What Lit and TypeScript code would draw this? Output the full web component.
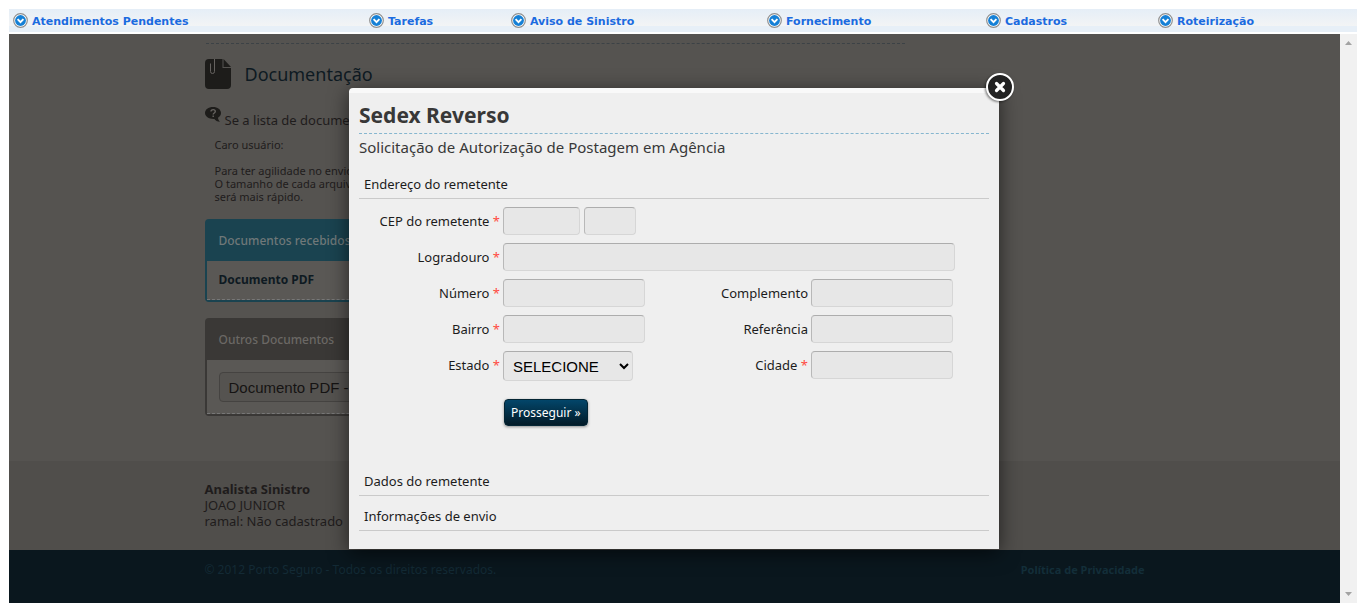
import { LitElement, html, css, svg, nothing } from "lit";
import { customElement } from "lit/decorators.js";

const MENU = ["Atendimentos Pendentes", "Tarefas", "Aviso de Sinistro", "Fornecimento", "Cadastros", "Roteirização"];

const bullet = svg`
  <circle cx="7.5" cy="7.5" r="6.8" fill="#fff" stroke="#8f8f8f" stroke-width="1.2"/>
  <circle cx="7.5" cy="7.5" r="5.4" fill="#1580d6"/>
  <path d="M4.6 6.2 7.5 9.1l2.9-2.9" fill="none" stroke="#fff" stroke-width="1.9"/>`;

@customElement("top-menu")
class TopMenu extends LitElement {
  static styles = css`
    :host { display: block; }
    .bar {
      display: grid;
      grid-template-columns: 356fr 142fr 256fr 219fr 172fr 199fr;
      align-items: center;
      height: 23px;
      padding-left: 4px;
      background: linear-gradient(#e5eef7, #f3f4f5 75%, #e7eff7 76%, #e7eff7);
    }
    .item {
      display: flex;
      align-items: center;
      gap: 4px;
      font: bold 11px/15px "DejaVu Sans", sans-serif;
      color: #1b6be0;
      text-decoration: none;
      white-space: nowrap;
    }
    .icon { width: 15px; height: 15px; flex: none; }
    .name { padding-top: 1px; }
  `;
  render() {
    return html`<nav class="bar">
      ${MENU.map((label) => html`<a class="item" href="#"><svg class="icon" viewBox="0 0 15 15">${bullet}</svg><span class="name">${label}</span></a>`)}
    </nav>`;
  }
}

@customElement("claim-page")
class ClaimPage extends LitElement {
  static styles = css`
    :host { display: block; background: #555350; color: #1f1c1c; font: 13px/16px "Noto Sans", sans-serif; }
    .wrap { max-width: 940px; margin: 0 auto; }
    .main { width: 700px; height: 427px; padding-top: 9px; box-sizing: border-box; }
    .rule { border-top: 1px dashed #3c4246; margin-left: 1px; }
    .heading { display: flex; align-items: center; gap: 14px; margin: 15px 0 0; font-size: 18px; line-height: 30px; font-weight: 400; color: #0e1a22; }
    .doc { width: 26px; height: 30px; }
    .hint { display: flex; gap: 4px; margin: 18px 0 0; font-size: 13px; line-height: 26px; height: 24px; }
    .balloon { width: 16px; height: 16px; }
    .note { margin: 7px 0 0; padding: 0 10px; font-size: 11px; line-height: 13px; }
    .text { margin: 0 0 13px; }
    .box { border: 2px solid #3a3836; border-radius: 4px; box-sizing: border-box; background: #5a5855; margin-bottom: 16px; }
    .box.received { border-color: #1a4350; margin-top: 16px; }
    .caption { margin: 0; padding: 0 12px; font-size: 12px; line-height: 40px; font-weight: 500; background: #3a3836; color: #6b6865; }
    .received .caption { background: #1a4350; color: #6f7879; }
    .body { padding: 0 12px; border-bottom: 1px dashed #777; }
    .received .body { line-height: 38px; font-size: 12px; font-weight: 700; color: #0e1a22; }
    .others .body { padding: 12px 12px 11px; }
    .select { width: 240px; height: 30px; padding: 0 5px; border: 1px solid #454341; border-radius: 4px; background: #555350; color: #151313; font: 15px "Liberation Sans", sans-serif; }
    .analyst { background: #504e4b; height: 89px; padding-top: 20px; box-sizing: border-box; }
    .footer { background: #0a171e; color: #132a35; height: 53px; padding-top: 12px; box-sizing: border-box; font-size: 12px; }
    .foot { display: flex; justify-content: space-between; }
    .privacy { color: #132e39; font-size: 11px; font-weight: 700; text-decoration: none; }
  `;
  render() {
    return html`
      <div class="wrap"><div class="main">
        <div class="rule"></div>
        <h1 class="heading">
          <svg class="doc" viewBox="0 0 26 30"><path d="M4 0h13.500v9H26v17a4 4 0 0 1-4 4H4a4 4 0 0 1-4-4V4a4 4 0 0 1 4-4Z" fill="#1d1c1a"/><path d="M18.500 0 26 8h-7.500Z" fill="#1d1c1a"/><path d="M5.500 4.500v8a2 2 0 0 0 4 0V0" fill="none" stroke="#65625f" stroke-width="1"/></svg>
          Documentação
        </h1>
        <div class="hint">
          <svg class="balloon" viewBox="0 0 16 16"><path d="M8 0c4.600 0 8 2.600 8 6 0 2-1.200 3.600-3 4.700.1 1.700 1 3.100 2 4.100-2.700-.3-4.600-1.400-5.600-2.900C4 12.200 0 9.600 0 6c0-3.400 3.400-6 8-6Z" fill="#1d1c1a"/><path d="M6 4.400c0-2.400 4.300-2.300 4.300.1C10.300 6 8.200 6 8.200 7.500M8.200 8.500V10" fill="none" stroke="#65625f" stroke-width="1.400"/></svg>
          Se a lista de docume
        </div>
        <div class="note">
          <p class="text">Caro usuário:</p>
          <div>Para ter agilidade no envio<br>O tamanho de cada arquivo<br>será mais rápido.</div>
        </div>
        <section class="box received">
          <h2 class="caption">Documentos recebidos</h2>
          <div class="body">Documento PDF</div>
        </section>
        <section class="box others">
          <h2 class="caption">Outros Documentos</h2>
          <div class="body"><select class="select" aria-label="Outros Documentos"><option>Documento PDF -</option></select></div>
        </section>
      </div></div>
      <div class="analyst"><div class="wrap"><strong>Analista Sinistro</strong><br>JOAO JUNIOR<br>ramal: Não cadastrado</div></div>
      <div class="footer"><div class="wrap foot"><span>© 2012 Porto Seguro - Todos os direitos reservados.</span><a class="privacy" href="#">Política de Privacidade</a></div></div>
    `;
  }
}

@customElement("sedex-dialog")
class SedexDialog extends LitElement {
  static styles = css`
    :host { display: block; position: relative; width: 650px; font: 13px/18px "Noto Sans", sans-serif; color: #1c1c1c; }
    .panel { box-sizing: border-box; border-top: 5px solid #f9f9f9; border-radius: 4px 4px 0 0; background: #efefef; padding: 0 10px 18px; box-shadow: 0 4px 20px rgba(0, 0, 0, 0.6); }
    .title { margin: 0; padding-top: 4px; height: 36px; font-size: 21px; line-height: 36px; color: #383838; border-bottom: 1px dashed #86b6cf; }
    .subtitle { margin: 0; height: 30px; line-height: 27px; font-size: 15px; color: #383838; }
    .section { margin: 0; padding: 3px 5px 0; height: 31px; line-height: 34px; font-size: 13px; font-weight: 400; border-bottom: 1px solid #cacaca; }
    .form { display: grid; grid-template-columns: 141px 142px 160px 1fr; column-gap: 3px; row-gap: 8px; padding: 8px 0 35px; }
    .label { text-align: right; line-height: 28px; white-space: nowrap; }
    .req { color: #ff4a3f; }
    .input { box-sizing: border-box; width: 142px; height: 28px; padding: 0 8px; border: 1px solid #d6d6d6; border-top-color: #adadad; border-left-color: #b8b8b8; border-radius: 4px; background: #e7e7e7; font: 15px "Liberation Sans", sans-serif; color: #000; }
    .cep { display: flex; gap: 4px; }
    .zip { width: 77px; }
    .suffix { width: 52px; }
    .wide { grid-column: 2 / -1; width: 452px; }
    .rest { grid-column: 2 / -1; }
    .state { width: 130px; height: 30px; padding: 0 5px; }
    .go { grid-column: 2 / -1; justify-self: start; margin: 10px 0 0 1px; height: 27px; padding: 0 6px; border: 1px solid #042534; border-radius: 4px; background: linear-gradient(#03466a, #021a27); color: #fff; font: 12px "Noto Sans", sans-serif; box-shadow: 0 1px 3px rgba(0, 0, 0, 0.4); white-space: nowrap; }
    .close { position: absolute; top: -16px; right: -16px; width: 30px; height: 30px; padding: 0; border: 0; background: none; }
    .cross { display: block; width: 30px; height: 30px; overflow: visible; filter: drop-shadow(-1px 1px 1px rgba(0, 0, 0, 0.5)); }
  `;
  private label(id: string, text: string, required = false) {
    return html`<label class="label" for=${id}>${text}${required ? html` <span class="req">*</span>` : nothing}</label>`;
  }
  render() {
    return html`
      <div class="panel" role="dialog" aria-labelledby="title">
        <h2 class="title" id="title">Sedex Reverso</h2>
        <p class="subtitle">Solicitação de Autorização de Postagem em Agência</p>
        <h3 class="section">Endereço do remetente</h3>
        <form class="form">
          ${this.label("cep", "CEP do remetente", true)}
          <div class="cep rest"><input class="input zip" id="cep"><input class="input suffix" aria-label="Complemento do CEP"></div>
          ${this.label("logradouro", "Logradouro", true)}<input class="input wide" id="logradouro">
          ${this.label("numero", "Número", true)}<input class="input" id="numero">
          ${this.label("complemento", "Complemento")}<input class="input" id="complemento">
          ${this.label("bairro", "Bairro", true)}<input class="input" id="bairro">
          ${this.label("referencia", "Referência")}<input class="input" id="referencia">
          ${this.label("estado", "Estado", true)}<select class="input state" id="estado"><option>SELECIONE</option></select>
          ${this.label("cidade", "Cidade", true)}<input class="input" id="cidade">
          <button class="go" type="button">Prosseguir »</button>
        </form>
        <h3 class="section">Dados do remetente</h3>
        <h3 class="section">Informações de envio</h3>
      </div>
      <button class="close" type="button" aria-label="Fechar">
        <svg class="cross" viewBox="0 0 30 30"><circle cx="15" cy="15" r="13" fill="#222" stroke="#fff" stroke-width="2"/><path d="m11.500 11.500 7 7m0-7-7 7" stroke="#fff" stroke-width="3.200" stroke-linecap="round"/></svg>
      </button>
    `;
  }
}

@customElement("app-root")
class AppRoot extends LitElement {
  static styles = css`
    :host { display: block; padding: 9px; background: #fff; }
    .frame { position: relative; display: grid; grid-template-columns: 1fr 17px; margin-top: 2px; }
    .scroll { display: flex; flex-direction: column; justify-content: space-between; align-items: center; padding: 7px 0; background: #f1f1f1; }
    .arrow { width: 7px; height: 4px; }
    .overlay { position: absolute; inset: 0 18px 0 0; display: flex; justify-content: center; align-items: flex-start; padding-top: 54px; }
  `;
  render() {
    return html`
      <top-menu></top-menu>
      <div class="frame">
        <claim-page></claim-page>
        <div class="scroll">
          <svg class="arrow" viewBox="0 0 7 4"><path d="M0 4 3.500 0 7 4Z" fill="#a3a3a3"/></svg>
          <svg class="arrow" viewBox="0 0 7 4"><path d="M0 0 3.500 4 7 0Z" fill="#a3a3a3"/></svg>
        </div>
        <div class="overlay"><sedex-dialog></sedex-dialog></div>
      </div>
    `;
  }
}
